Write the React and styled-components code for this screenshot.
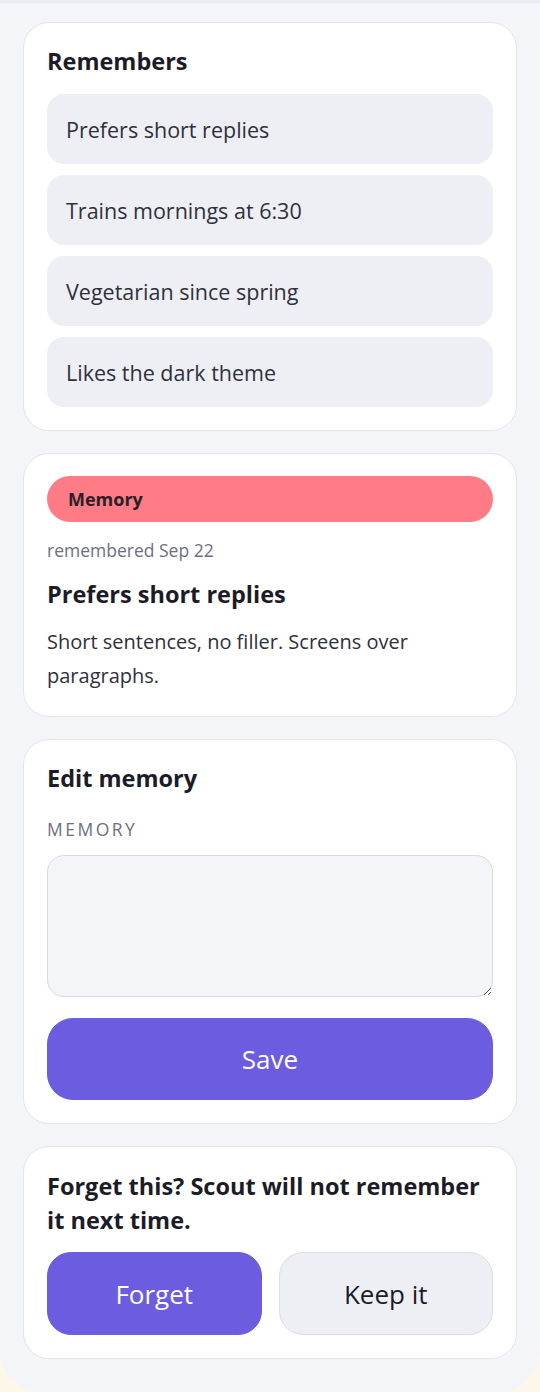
import React from "react";
import styled, { createGlobalStyle } from "styled-components";

const colors = {
  page: "#f4f5f9",
  card: "#ffffff",
  line: "#e4e5eb",
  chip: "#eeeff5",
  ink: "#1b1c28",
  text: "#2f303c",
  muted: "#6c6f80",
  accent: "#6b5ce0",
  coral: "#ff7c86",
};

const GlobalStyle = createGlobalStyle`
  html, body {
    margin: 0;
    padding: 0;
    background: #fdf7ea;
  }
  body {
    font-family: "Open Sans", "Noto Sans", sans-serif;
    color: ${colors.ink};
  }
  * { box-sizing: border-box; }
`;

const memories = [
  "Prefers short replies",
  "Trains mornings at 6:30",
  "Vegetarian since spring",
  "Likes the dark theme",
];

export default function App() {
  return (
    <>
      <GlobalStyle />
      <Screen>
        <Card>
          <Heading>Remembers</Heading>
          <List>
            {memories.map((m) => (
              <Item key={m}>{m}</Item>
            ))}
          </List>
        </Card>

        <Card>
          <Badge>Memory</Badge>
          <Meta>remembered Sep 22</Meta>
          <Heading $gap="15px">Prefers short replies</Heading>
          <Body>Short sentences, no filler. Screens over paragraphs.</Body>
        </Card>

        <Card>
          <Heading $gap="23px">Edit memory</Heading>
          <Label htmlFor="memory-field">Memory</Label>
          <Field id="memory-field" />
          <Button $primary>Save</Button>
        </Card>

        <Card>
          <Heading $gap="15px" $lines>
            Forget this? Scout will not remember it next time.
          </Heading>
          <Actions>
            <Button $primary $short>Forget</Button>
            <Button $short>Keep it</Button>
          </Actions>
        </Card>
      </Screen>
    </>
  );
}

const Screen = styled.main`
  min-height: 1392px;
  background: ${colors.page};
  border-top: 3px solid #e9eaf0;
  border-radius: 0 0 44px 44px;
  padding: 19px 23px 34px;
  display: flex;
  flex-direction: column;
  gap: 22px;
`;

const Card = styled.section`
  background: ${colors.card};
  border: 1px solid ${colors.line};
  border-radius: 26px;
  padding: 22px 23px 23px;
  display: flex;
  flex-direction: column;
`;

const Heading = styled.h2`
  margin: 0 0 ${(p) => p.$gap || "17px"};
  font-size: 23.5px;
  font-weight: 700;
  line-height: ${(p) => (p.$lines ? "34px" : "32px")};
  color: ${colors.ink};
`;

const List = styled.ul`
  list-style: none;
  margin: 0;
  padding: 0;
  display: flex;
  flex-direction: column;
  gap: 11px;
`;

const Item = styled.li`
  background: ${colors.chip};
  border-radius: 17px;
  height: 70px;
  padding: 0 19px;
  display: flex;
  align-items: center;
  font-size: 21.5px;
  color: ${colors.text};
`;

const Badge = styled.div`
  background: ${colors.coral};
  border-radius: 999px;
  height: 46px;
  padding: 0 21px;
  display: flex;
  align-items: center;
  font-size: 18px;
  font-weight: 700;
  color: #2a1f26;
`;

const Meta = styled.div`
  margin: 16px 0 16px;
  font-size: 17.5px;
  line-height: 24px;
  color: ${colors.muted};
`;

const Body = styled.p`
  margin: 0;
  font-size: 20px;
  line-height: 34px;
  color: ${colors.text};
`;

const Label = styled.label`
  font-size: 17.5px;
  line-height: 24px;
  letter-spacing: 2.5px;
  text-transform: uppercase;
  color: ${colors.muted};
  margin: 0 0 14px;
`;

const Field = styled.textarea`
  height: 142px;
  width: 100%;
  background: ${colors.page};
  border: 1.5px solid #d9dae2;
  border-radius: 17px;
  padding: 14px 18px;
  font: inherit;
  font-size: 20px;
  margin-bottom: 21px;
  resize: vertical;
  outline: none;
`;

const Actions = styled.div`
  display: grid;
  grid-template-columns: 1fr 1fr;
  gap: 17px;
`;

const Button = styled.button`
  height: ${(p) => (p.$short ? "83px" : "82px")};
  width: 100%;
  border-radius: ${(p) => (p.$short ? "24px" : "26px")};
  border: 1.5px solid ${(p) => (p.$primary ? colors.accent : "#dcdde5")};
  background: ${(p) => (p.$primary ? colors.accent : colors.chip)};
  color: ${(p) => (p.$primary ? "#ffffff" : colors.ink)};
  font-family: inherit;
  font-size: 26px;
  font-weight: 400;
  cursor: pointer;
`;
